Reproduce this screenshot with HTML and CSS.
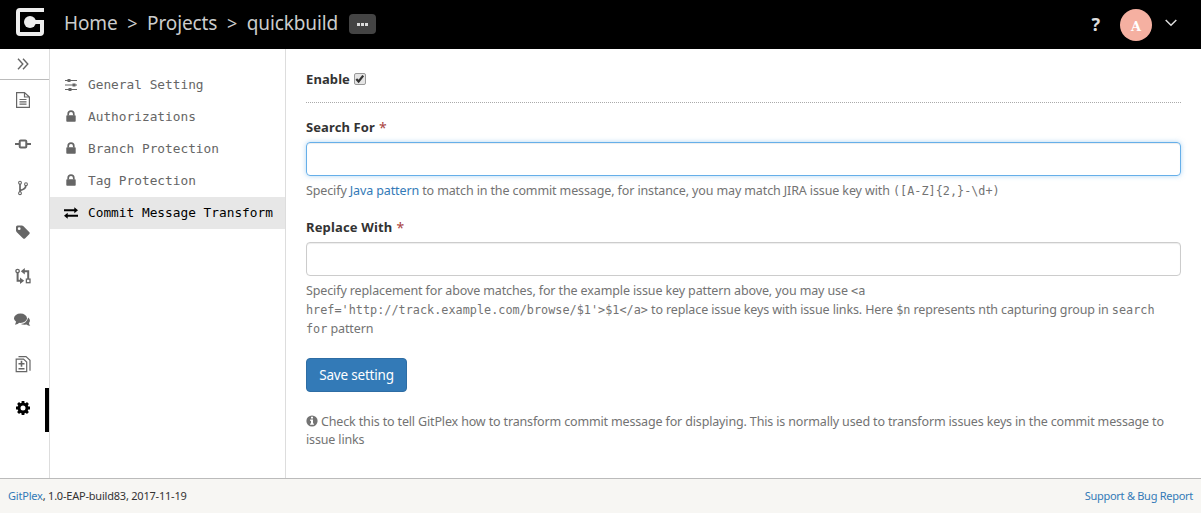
FILE: index.html
```html
<!DOCTYPE html>
<html lang="en">
<head>
<meta charset="utf-8">
<title>GitPlex - Commit Message Transform</title>
<link rel="stylesheet" href="styles.css">
</head>
<body>
<header class="topbar">
  <svg class="logo" width="30" height="30" viewBox="0 0 30 30"><path d="M28 2H4Q2 2 2 4V24Q2 26 4 26H24Q26 26 26 24V14H14" fill="none" stroke="#eee" stroke-width="4"/><circle cx="14" cy="14" r="6" fill="#eee"/></svg>
  <nav class="crumbs"><span class="c-home">Home</span><span class="sep">&gt;</span><span class="c-projects">Projects</span><span class="sep">&gt;</span><span class="c-name">quickbuild</span><span class="more"><i></i><i></i><i></i></span></nav>
  <div class="user"><span class="help">?</span><span class="avatar">A</span>
    <svg width="12" height="8" viewBox="0 0 12 8"><path d="M.7 1L6 6.3 11.3 1" fill="none" stroke="#ddd" stroke-width="1.5"/></svg></div>
</header>
<div class="main">
  <aside class="rail">
    <div class="expand"><svg width="12" height="12" viewBox="0 0 12 12" fill="none" stroke="#666" stroke-width="1.4"><path d="M1 .8L5.8 6 1 11.2M6 .8L10.8 6 6 11.2"/></svg></div>
    <div class="tool"><svg width="16" height="18" viewBox="0 0 16 18" fill="none" stroke="#666" stroke-width="1.2"><path d="M1.6 1.6H9.5L14.4 6V16.4H1.6ZM9.5 1.6V6H14.4M4.5 8.5H11.5M4.5 10.8H11.5M4.5 13.1H11.5"/></svg></div>
    <div class="tool"><svg width="16" height="16" viewBox="0 0 16 16" fill="none" stroke="#666" stroke-width="2"><rect x="4.7" y="4.5" width="6.6" height="7" rx="1"/><path d="M0 8H4.5M11.5 8H16"/></svg></div>
    <div class="tool"><svg width="16" height="16" viewBox="0 0 16 16" fill="none" stroke="#666" stroke-width="1.1"><circle cx="5" cy="2.7" r="1.4"/><circle cx="5" cy="13.2" r="1.4"/><circle cx="11" cy="4.2" r="1.4"/><path stroke-width="1.7" d="M5 4V12M5.2 10.3C9 9.5 10.7 8.5 10.8 5.7"/></svg></div>
    <div class="tool"><svg width="16" height="16" viewBox="0 0 16 16"><path fill="#666" fill-rule="evenodd" d="M1 3Q1 1.5 2.5 1.5H6.8Q7.7 1.5 8.5 2.3L14.4 8.2Q15.2 9 14.4 9.9L10 14.4Q9.1 15.3 8.2 14.4L1.8 8.2Q1 7.4 1 6.5ZM4.2 3.3A1.4 1.4 0 1 0 4.2 6.1A1.4 1.4 0 1 0 4.2 3.3Z"/></svg></div>
    <div class="tool"><svg width="16" height="16" viewBox="0 0 16 16"><g fill="none" stroke="#666" stroke-width="1.3"><circle cx="2.6" cy="3" r="1.7"/><rect x="11.4" y="11.1" width="3.6" height="3.6"/><path stroke-width="2" d="M2.6 4.8V12.8H5.5M13.2 11V3.2H9"/></g><path fill="#666" d="M9.8 0V6.4L5.8 3.2ZM5 9.6V16L9.2 12.8Z"/></svg></div>
    <div class="tool"><svg width="17" height="14" viewBox="0 0 17 14" fill="#666"><ellipse cx="6.5" cy="5.3" rx="6.5" ry="4.7"/><path d="M2.5 7.5L1 11.7Q4 11.5 5.8 9.2ZM14.2 4.5Q17.2 7 15 10.1Q15 11.5 16.3 12.8Q13.8 12.8 12.5 11.6Q8.5 12 6.8 10.9Q12.5 10.7 14.2 4.5Z"/></svg></div>
    <div class="tool"><svg width="16" height="18" viewBox="0 0 16 18" fill="none" stroke="#666" stroke-width="1.2"><path d="M1.2 4.1H8.5L11.7 7V16.6H1.2ZM3.5 1.6H11L15 5.2V15.7"/><path stroke-width="1.6" d="M3.5 8.7H9.5M6.5 5.8V11.7M3.5 13.7H9.5"/></svg></div>
    <div class="tool active"><svg width="16" height="16" viewBox="0 0 16 16"><circle cx="8" cy="8" r="4" fill="none" stroke="#000" stroke-width="3"/><path d="M8 1V3.4M8 12.6V15M1 8H3.4M12.6 8H15M3.05 3.05L4.8 4.8M11.2 11.2L12.95 12.95M12.95 3.05L11.2 4.8M4.8 11.2L3.05 12.95" stroke="#000" stroke-width="2.8"/></svg></div>
  </aside>
  <nav class="menu">
    <a><svg width="14" height="14" viewBox="0 0 14 14"><path stroke="#666" stroke-width="1.2" d="M1 2.5H13M1 7H13M1 11.5H13"/><path fill="#666" d="M3.5 1H6.5V4H3.5ZM8.5 5.5H11.5V8.5H8.5ZM4.5 10H7.5V13H4.5Z"/></svg>General Setting</a>
    <a><svg width="14" height="14" viewBox="0 0 14 14"><path fill="none" stroke="#666" stroke-width="1.7" d="M4.2 5.5V3.9Q4.2 1.2 7 1.2T9.8 3.9V5.5"/><rect x="2.3" y="5.3" width="9.4" height="6.4" rx=".8" fill="#666"/></svg>Authorizations</a>
    <a><svg width="14" height="14" viewBox="0 0 14 14"><path fill="none" stroke="#666" stroke-width="1.7" d="M4.2 5.5V3.9Q4.2 1.2 7 1.2T9.8 3.9V5.5"/><rect x="2.3" y="5.3" width="9.4" height="6.4" rx=".8" fill="#666"/></svg>Branch Protection</a>
    <a><svg width="14" height="14" viewBox="0 0 14 14"><path fill="none" stroke="#666" stroke-width="1.7" d="M4.2 5.5V3.9Q4.2 1.2 7 1.2T9.8 3.9V5.5"/><rect x="2.3" y="5.3" width="9.4" height="6.4" rx=".8" fill="#666"/></svg>Tag Protection</a>
    <a class="selected"><svg width="14" height="14" viewBox="0 0 14 14"><path stroke="#000" stroke-width="2" d="M0 4.2H11M3 9.8H14"/><path d="M10.3 1.2L14 4.2 10.3 7.2ZM3.7 6.8V12.8L0 9.8Z"/></svg>Commit Message Transform</a>
  </nav>
  <main class="form">
    <div class="enable"><b class="l-enable">Enable</b><span class="check"><svg width="12" height="12" viewBox="0 0 12 12"><path d="M2.3 6L4.6 8.5 9.2 2.6" fill="none" stroke="#333" stroke-width="2.2"/></svg></span></div>
    <div class="label"><b class="l-search">Search For</b><em>*</em></div>
    <div class="input focus"></div>
    <div class="hint"><p>Specify <a>Java pattern</a> to match in the commit message, for instance, you may match JIRA issue key with <code>([A-Z]{2,}-\d+)</code></p></div>
    <div class="label second"><b class="l-replace">Replace With</b><em>*</em></div>
    <div class="input"></div>
    <div class="hint"><p>Specify replacement for above matches, for the example issue key pattern above, you may use <code>&lt;a</code></p><p><code>href='http://track.example.com/browse/$1'&gt;$1&lt;/a&gt;</code> to replace issue keys with issue links. Here <code>$n</code> represents nth capturing group in <code>search</code></p><p><code>for</code> pattern</p></div>
    <button class="save">Save setting</button>
    <div class="note"><p class="n1"><svg width="12" height="12" viewBox="0 0 12 12"><circle cx="6" cy="6" r="5.6" fill="#737373"/><path fill="#fff" d="M5 1.8H7V3.6H5ZM4.2 4.6H7V8.4H7.9V9.8H4.1V8.4H5V6H4.2Z"/></svg>Check this to tell GitPlex how to transform commit message for displaying. This is normally used to transform issues keys in the commit message to</p><p>issue links</p></div>
  </main>
</div>
<footer class="footer"><span class="f-left"><a>GitPlex</a>, 1.0-EAP-build83, 2017-11-19</span><a class="f-right">Support &amp; Bug Report</a></footer>
</body>
</html>
```
FILE: styles.css
```css
* { box-sizing: border-box; }
body { margin: 0; height: 513px; display: flex; flex-direction: column; overflow: hidden; background: #fff; color: #333; font-family: "Noto Sans", sans-serif; font-size: 12.5px; }
p { margin: 0; }
a { color: #337ab7; }
svg { display: block; flex: none; }
.topbar { flex: none; height: 49px; padding: 0 24px 0 16px; background: #000; color: #ddd; display: flex; align-items: center; }
.logo { margin-top: -3px; }
.crumbs { display: flex; align-items: center; margin: -3px 0 0 18px; font-size: 19px; white-space: nowrap; color: #ccc; }
.c-home, .c-projects, .c-name { letter-spacing: -.12px; }
.sep { width: 29.5px; text-align: center; font-size: 18px; }
.more { width: 27px; height: 20px; margin: 2px 0 0 11px; border-radius: 4px; background: #444; display: flex; gap: 1px; align-items: center; justify-content: center; }
.more i { width: 3px; height: 3px; background: #ddd; }
.user { margin-left: auto; display: flex; align-items: center; }
.help { font: bold 18px "Noto Sans", sans-serif; margin: -2px 20px 0 0; }
.avatar { width: 32px; height: 32px; margin-right: 13px; border-radius: 50%; background: #f5b0a1; color: #fff; font: bold 13px/35px "DejaVu Serif", serif; text-align: center; }
.user svg { margin-top: -3px; }
.main { flex: 1; display: flex; min-height: 0; }
.rail { flex: none; width: 50px; border-right: 1px solid #ddd; }
.expand { height: 31px; padding-right: 4px; border-bottom: 1px solid #bbb; display: flex; align-items: center; justify-content: center; }
.tool { height: 44px; padding: 0 4px 4px 0; display: flex; align-items: center; justify-content: center; }
.active { border-right: 4px solid #000; padding-right: 0; }
.menu { flex: none; width: 236px; padding-top: 20px; border-right: 1px solid #ddd; }
.menu a { height: 32px; padding: 0 0 1px 14px; display: flex; align-items: center; gap: 10px; color: #666; font: 12.8px "DejaVu Sans Mono", monospace; white-space: pre; }
.menu .selected { background: #e7e7e7; color: #000; }
.form { flex: 1; min-width: 0; padding: 0 20px; }
.enable { height: 54px; padding-top: 7px; border-bottom: 1px dotted #aaa; display: flex; align-items: center; gap: 4px; }
.enable b, .label b { font-size: 13px; white-space: nowrap; letter-spacing: .1px; }
.label .l-replace { letter-spacing: .15px; }
.check { width: 12px; height: 12px; border: 1px solid #999; border-radius: 2px; background: #e5e5e5; display: flex; align-items: center; justify-content: center; }
.label { height: 39px; padding-top: 15px; line-height: 19px; display: flex; gap: 4px; }
.label em { color: #a94442; font-style: normal; font-size: 14px; }
.second { margin-top: 8px; height: 34px; padding-top: 10px; }
.input { height: 34px; border: 1px solid #ccc; border-radius: 4px; box-shadow: inset 0 1px 1px rgba(0,0,0,.075); }
.focus { border-color: #66afe9; box-shadow: inset 0 1px 1px rgba(0,0,0,.075), 0 0 5px rgba(102,175,233,.5); }
.hint { padding-top: 5px; color: #737373; line-height: 19px; letter-spacing: -.12px; white-space: nowrap; }
.hint p { height: 19px; }
code { font: 11.8px "DejaVu Sans Mono", monospace; letter-spacing: .02px; }
.save { display: block; width: 101px; height: 34px; margin-top: 20px; padding: 0; border: 1px solid #2e6da4; border-radius: 4px; background: #337ab7; color: #fff; font: 13.5px "Noto Sans", sans-serif; letter-spacing: -.2px; }
.note { margin-top: 21px; color: #737373; line-height: 18px; letter-spacing: -.15px; white-space: nowrap; }
.n1 svg { display: inline-block; vertical-align: -1px; margin-right: 3px; }
.footer { flex: none; height: 35px; padding: 0 8px 2px; border-top: 1px solid #bbb; background: #f7f6f3; display: flex; align-items: center; justify-content: space-between; font-size: 11px; white-space: nowrap; }
.f-left { letter-spacing: -.21px; }
.f-right { letter-spacing: -.28px; }
```
